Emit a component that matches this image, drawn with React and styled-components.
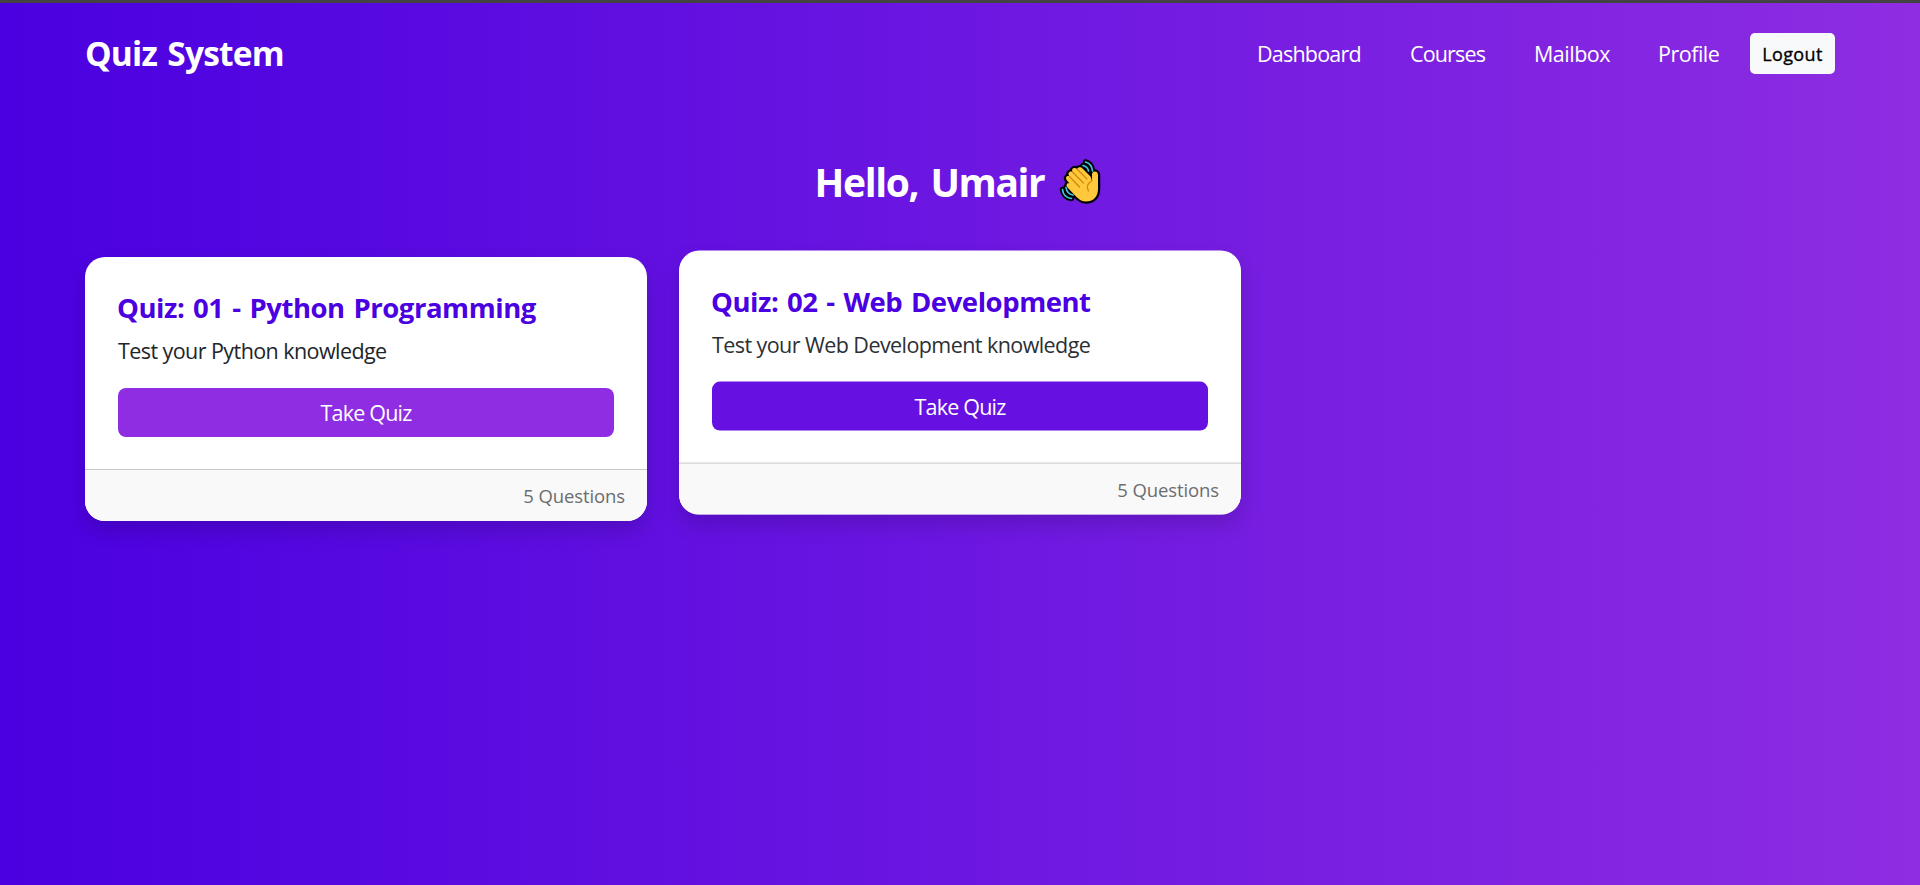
import React from 'react';
import styled, { createGlobalStyle } from 'styled-components';

const GlobalStyle = createGlobalStyle`
  * { box-sizing: border-box; }
  body {
    margin: 0;
    font-family: "Segoe UI", "Open Sans", "Noto Sans", sans-serif;
    color: #212529;
  }
`;

const Page = styled.div`
  min-height: 100vh;
  border-top: 3px solid #434343;
  background: linear-gradient(to right, #4a00e0, #8e2de2) border-box;
  overflow: hidden;
`;

const TopBar = styled.nav`
  display: flex;
  align-items: center;
  height: 101px;
  padding: 0 85px;
`;

const Brand = styled.a`
  margin-right: auto;
  padding-bottom: 2px;
  color: #fff;
  font-size: 33.5px;
  font-weight: 700;
  line-height: 48px;
  letter-spacing: -0.8px;
  word-spacing: 2.4px;
  white-space: nowrap;
`;

const NavList = styled.div`
  display: flex;
  align-items: center;
  gap: 48px;
  margin-right: 31px;
`;

const NavLink = styled.a`
  width: ${(p) => p.$width}px;
  color: #fff;
  font-size: 21.5px;
  line-height: 32px;
  letter-spacing: ${(p) => p.$tracking}px;
  white-space: nowrap;
`;

const LogoutButton = styled.button`
  width: 85px;
  height: 41px;
  padding: 0;
  border: 0;
  border-radius: 5px;
  background: #f8f9fa;
  color: #000;
  font: 500 18px/28px "Segoe UI", "Open Sans", "Noto Sans", sans-serif;
  letter-spacing: 0.35px;
  -webkit-text-stroke: 0.35px #000;
`;

const Greeting = styled.h1`
  display: flex;
  align-items: center;
  justify-content: center;
  gap: 16px;
  height: 60px;
  margin: 48px 0 45px;
  padding-right: 3px;
  color: #fff;
  font-size: 39px;
  font-weight: 700;
  line-height: 60px;
  letter-spacing: -1.4px;
  word-spacing: 3.6px;
  white-space: nowrap;
`;

const Wave = styled.svg`
  display: block;
  width: 42px;
  height: 45px;
  margin-top: 1px;
`;

const CardGrid = styled.main`
  display: grid;
  grid-template-columns: repeat(3, 562px);
  gap: 32px;
  padding: 0 85px;
`;

const Card = styled.article`
  height: 264px;
  border-radius: 20px;
  overflow: hidden;
  background: #fff;
  box-shadow: 0 10px 20px rgba(0, 0, 0, 0.15);
  transform: translateY(${(p) => p.$lift}px);
`;

const CardBody = styled.div`
  height: 212px;
  padding: 34px 33px 0;
`;

const CardTitle = styled.h5`
  margin: 0 0 10px -1px;
  color: #4a00e0;
  font-size: 27.5px;
  font-weight: 700;
  line-height: 34px;
  letter-spacing: -0.45px;
  word-spacing: 2px;
  white-space: nowrap;
`;

const CardText = styled.p`
  margin: 0 0 21px;
  color: ${(p) => p.$ink};
  font-size: 21.5px;
  line-height: 32px;
  letter-spacing: -0.57px;
  white-space: nowrap;
`;

const QuizButton = styled.a`
  display: block;
  height: 49px;
  border-radius: 8px;
  background: ${(p) => p.$tone};
  color: #fff;
  font-size: 21.5px;
  line-height: 49px;
  letter-spacing: -0.8px;
  text-align: center;
`;

const CardFooter = styled.footer`
  height: 52px;
  padding: 0 22px;
  border-top: 1px solid #c8c8c8;
  background: #f9f9f9;
  color: #6c6d6f;
  font-size: 18.5px;
  line-height: 51px;
  letter-spacing: -0.1px;
  text-align: right;
`;

const links = [
  { label: 'Dashboard', width: 105, tracking: -0.8 },
  { label: 'Courses', width: 76, tracking: -0.85 },
  { label: 'Mailbox', width: 76, tracking: -0.5 },
  { label: 'Profile', width: 61, tracking: -0.5 },
];

const quizzes = [
  {
    title: 'Quiz: 01 - Python Programming',
    text: 'Test your Python knowledge',
    tone: '#8e2de2',
    ink: '#212529',
    lift: 0,
  },
  {
    title: 'Quiz: 02 - Web Development',
    text: 'Test your Web Development knowledge',
    tone: '#6611e1',
    ink: '#2c3034',
    lift: -6.4,
  },
];

const handShape =
  'M32 21V14.500C32 10.500 38 10.500 38 15V29C38 37 33 41.500 26 41.500C22 41.500 19 39.500 16 36.500L7.500 27.500C5.500 25 7 22.500 9.500 23.500L7 20.500C5 18 6.500 15 9.500 16.500C7 13.500 9.500 10.500 12.500 12C11 8.500 14.500 7 17 9C18.500 6.500 21 7 22.500 8.500L30.500 16.500Z';

const upperArcs = 'M25.500 2C29.500 3 32 6.500 32.500 11M23 5.500C26 6.200 28 8 28.500 11';
const lowerArcs = 'M2.500 29.500C3 34.500 6.500 38 11.500 38.500M6 27.500C6.500 31.500 9 34.200 13 35';

function WavingHand() {
  return (
    <Wave viewBox="0 0 42 45" overflow="visible" fill="none" strokeLinecap="round" strokeLinejoin="round" aria-label="waving hand">
      <g stroke="#000">
        <path d={upperArcs} strokeWidth="5.500" />
        <path d={lowerArcs} strokeWidth="5.500" />
        <path d={handShape} strokeWidth="4.500" />
      </g>
      <path d={handShape} fill="#ffc83d" />
      <path
        d="M12.500 12L23.500 23M9.500 16.500L19.500 27M17 9L27 19M32 20.500C27.500 23.500 26 27 28.500 31"
        stroke="#d08a10"
        strokeWidth="1.300"
      />
      <g stroke="#42c8e8" strokeWidth="1.700">
        <path d={upperArcs} />
        <path d={lowerArcs} />
      </g>
    </Wave>
  );
}

export default function App() {
  return (
    <>
      <GlobalStyle />
      <Page>
        <TopBar>
          <Brand>Quiz System</Brand>
          <NavList>
            {links.map((l) => (
              <NavLink key={l.label} $width={l.width} $tracking={l.tracking}>
                {l.label}
              </NavLink>
            ))}
          </NavList>
          <LogoutButton>Logout</LogoutButton>
        </TopBar>
        <Greeting>
          <span>Hello, Umair</span>
          <WavingHand />
        </Greeting>
        <CardGrid>
          {quizzes.map((q) => (
            <Card key={q.title} $lift={q.lift}>
              <CardBody>
                <CardTitle>{q.title}</CardTitle>
                <CardText $ink={q.ink}>{q.text}</CardText>
                <QuizButton $tone={q.tone}>Take Quiz</QuizButton>
              </CardBody>
              <CardFooter>5 Questions</CardFooter>
            </Card>
          ))}
        </CardGrid>
      </Page>
    </>
  );
}
